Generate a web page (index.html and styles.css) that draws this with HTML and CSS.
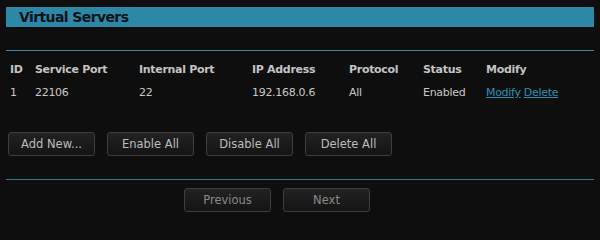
FILE: index.html
```html
<!DOCTYPE html>
<html>
<head>
<meta charset="utf-8">
<link rel="stylesheet" href="styles.css">
</head>
<body>
<div class="page">
  <div class="title-bar"><span class="title">Virtual Servers</span></div>
  <div class="rule rule-top"></div>
  <table class="grid">
    <thead>
      <tr>
        <th class="c-id">ID</th>
        <th class="c-sp">Service Port</th>
        <th class="c-ip">Internal Port</th>
        <th class="c-addr">IP Address</th>
        <th class="c-proto">Protocol</th>
        <th class="c-status">Status</th>
        <th class="c-mod">Modify</th>
      </tr>
    </thead>
    <tbody>
      <tr>
        <td>1</td>
        <td>22106</td>
        <td>22</td>
        <td>192.168.0.6</td>
        <td>All</td>
        <td>Enabled</td>
        <td><a class="link" href="#">Modify</a> <a class="link" href="#">Delete</a></td>
      </tr>
    </tbody>
  </table>
  <div class="actions">
    <button class="btn">Add New...</button>
    <button class="btn">Enable All</button>
    <button class="btn">Disable All</button>
    <button class="btn">Delete All</button>
  </div>
  <div class="rule rule-bottom"></div>
  <div class="pager">
    <button class="btn btn-dim">Previous</button>
    <button class="btn btn-dim">Next</button>
  </div>
</div>
</body>
</html>
```
FILE: styles.css
```css
html, body {
  margin: 0;
  padding: 0;
  background: #0e0e0e;
}
body {
  font-family: "DejaVu Sans", Verdana, sans-serif;
  color: #c8c8c8;
  width: 600px;
  height: 219px;
  overflow: hidden;
}
.page {
  padding: 7px 6px 0 6px;
}
.title-bar {
  background: #2d87a6;
  height: 20px;
  display: flex;
  align-items: center;
  padding-left: 13px;
}
.title-bar .title {
  font-family: "DejaVu Sans", Verdana, sans-serif;
  font-weight: bold;
  font-size: 14px;
  letter-spacing: -0.6px;
  color: #0a1218;
}
.rule {
  height: 1px;
  background: #2d87a6;
}
.rule-top {
  margin-top: 23px;
}
.grid {
  border-collapse: collapse;
  margin-top: 7px;
  font-size: 11px;
  letter-spacing: -0.3px;
}
.grid th {
  text-align: left;
  font-weight: bold;
  color: #c4c4c4;
  padding: 0 0 0 4px;
  height: 23px;
}
.grid td {
  padding: 0 0 0 4px;
  height: 23px;
  color: #c8c8c8;
}
.c-id { width: 21px; }
.c-sp { width: 100px; }
.c-ip { width: 109px; }
.c-addr { width: 93px; }
.c-proto { width: 70px; }
.c-status { width: 59px; }
.c-mod { width: 80px; }
.link {
  color: #2d8fb4;
  text-decoration: underline;
}
.actions {
  display: flex;
  gap: 12px;
  margin-top: 28px;
  padding-left: 2px;
}
.btn {
  width: 87px;
  height: 24px;
  border: 1px solid #3e3e3e;
  border-radius: 3px;
  background: linear-gradient(#222222, #141414);
  color: #bdbdbd;
  font-family: "DejaVu Sans", Verdana, sans-serif;
  font-size: 11.5px;
  padding: 0;
}
.btn-dim {
  color: #8a8a8a;
}
.rule-bottom {
  margin-top: 23px;
  background: #1f7f96;
}
.pager {
  display: flex;
  gap: 12px;
  margin-top: 8px;
  padding-left: 178px;
}
```
